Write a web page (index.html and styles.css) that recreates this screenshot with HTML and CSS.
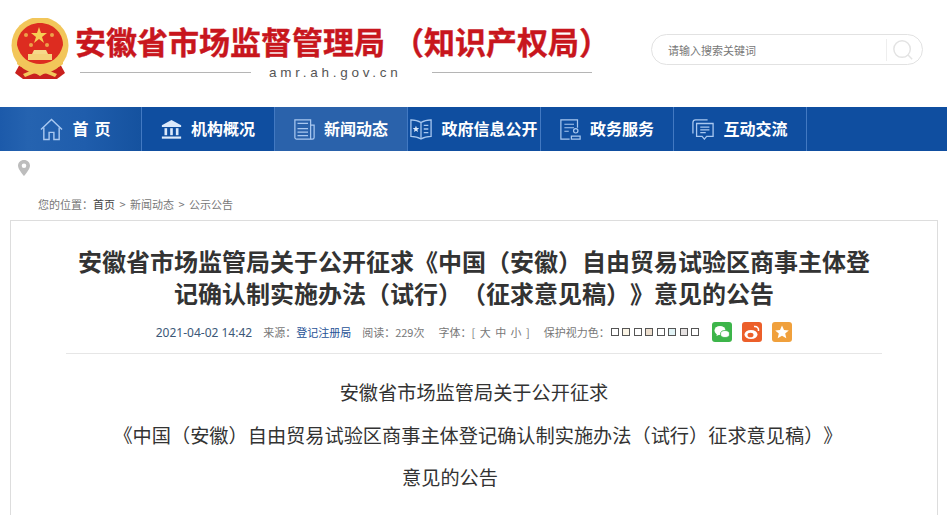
FILE: index.html
```html
<!DOCTYPE html>
<html lang="zh-CN">
<head>
    <meta charset="UTF-8">
    <meta name="viewport" content="width=device-width, initial-scale=1.0">
    <title>安徽省市场监督管理局（知识产权局）</title>
    <link rel="stylesheet" href="styles.css">
</head>
<body>
    <header class="header">
        <svg class="emblem" viewBox="0 0 58 62" width="58" height="62">
            <path d="M10 44 L4 55 L12 61 L46 61 L54 55 L48 44 Z" fill="#c9201e"/>
            <path d="M12 56 L24 51 L29 54 L34 51 L46 56 L44 59 L34 55 L29 58 L24 55 L14 59 Z" fill="#f2c75c"/>
            <circle cx="29" cy="27.500" r="28.500" fill="#f2c65a"/>
            <path d="M29 46 C19 46 9 40 6 27 C6 14 17 5 29 5 C41 5 52 14 52 27 C49 40 39 46 29 46 Z" fill="#dd2c20"/>
            <polygon points="28,9 30,15 36,15 31,19 33,25 28,21 23,25 25,19 20,15 26,15" fill="#f6cf55"/>
            <circle cx="15" cy="17" r="2" fill="#eda24a"/>
            <circle cx="41" cy="17" r="2" fill="#eda24a"/>
            <circle cx="20" cy="27" r="2" fill="#eda24a"/>
            <circle cx="36" cy="27" r="2" fill="#eda24a"/>
            <path d="M23 32 H35 L37 36 H21 Z" fill="#f6d98a"/>
            <rect x="17" y="36" width="24" height="6" fill="#f4d27a"/>
            <path d="M6 38 C12 50 22 50 29 50 C36 50 46 50 52 38 L52 46 C44 54 14 54 6 46 Z" fill="#f2c65a"/>
        </svg>
        <div class="site">
            <div class="site-name">安徽省市场监督管理局<span class="site-sub">（知识产权局）</span></div>
            <div class="site-domain">
                <span class="rule"></span>
                <span>amr.ah.gov.cn</span>
                <span class="rule rule-right"></span>
            </div>
        </div>
        <div class="search">
            <span class="search-text">请输入搜索关键词</span>
            <span class="search-btn">
                <svg viewBox="0 0 24 24" width="22" height="22" fill="none" stroke="#e3e3e3" stroke-width="1.6">
                    <circle cx="11" cy="11" r="9"/>
                    <path d="M17.5 17.5 L22 22"/>
                </svg>
            </span>
        </div>
    </header>

    <nav class="nav">
        <a class="nav-item nav-home">
            <svg viewBox="0 0 24 24" width="23" height="23" fill="none" stroke="#a9c8f0" stroke-width="1.5">
                <path d="M1 12 L12 1.5 L23 12"/>
                <path d="M4 10 V22.5 H9.5 V15 H14.5 V22.5 H20 V10"/>
            </svg>
            <span class="nav-spaced">首页</span>
        </a>
        <a class="nav-item">
            <svg viewBox="0 0 24 24" width="21" height="21" fill="#dce9fa">
                <path d="M12 1 L23 7 V9 H1 V7 Z"/>
                <rect x="4" y="10.5" width="3" height="8"/>
                <rect x="10.5" y="10.5" width="3" height="8"/>
                <rect x="17" y="10.5" width="3" height="8"/>
                <rect x="1" y="20" width="22" height="2.5"/>
            </svg>
            <span>机构概况</span>
        </a>
        <a class="nav-item nav-active">
            <svg viewBox="0 0 24 24" width="21" height="23" fill="none" stroke="#a9c8f0" stroke-width="1.4">
                <path d="M1 1 H19 V23 H3 C2 23 1 22 1 21 Z"/>
                <path d="M19 7 H23 V21 C23 22 22 23 21 23 H19"/>
                <path d="M4 5 H16 M4 11 H16 M4 15 H16 M4 19 H16"/>
            </svg>
            <span>新闻动态</span>
        </a>
        <a class="nav-item">
            <svg viewBox="0 0 24 24" width="22" height="22" fill="none" stroke="#a9c8f0" stroke-width="1.4">
                <path d="M12 5 C9 3 5 2 1 2 V20 C5 20 9 21 12 23 C15 21 19 20 23 20 V2 C19 2 15 3 12 5 Z"/>
                <path d="M12 5 V23 M15 8 H20 M15 12 H20 M15 16 H20"/>
                <polygon points="6.5,8.5 7.5,11 10,11 8,12.8 8.8,15.2 6.5,13.8 4.2,15.2 5,12.8 3,11 5.5,11" fill="#dce9fa" stroke="none"/>
            </svg>
            <span>政府信息公开</span>
        </a>
        <a class="nav-item">
            <svg viewBox="0 0 24 24" width="21" height="23" fill="none" stroke="#a9c8f0" stroke-width="1.4">
                <path d="M20 10 V1 H1 V23 H11"/>
                <path d="M5 6 H16 M5 10 H16 M5 14 H10"/>
                <circle cx="18" cy="13.5" r="2.5"/>
                <path d="M13 23 V19.5 H23 V23 Z"/>
            </svg>
            <span>政务服务</span>
        </a>
        <a class="nav-item">
            <svg viewBox="0 0 24 24" width="22" height="22" fill="none" stroke="#a9c8f0" stroke-width="1.4">
                <path d="M1 17 V5 C1 3 2 2 4 2 H17"/>
                <path d="M5 6 H23 V20 H16 L13.5 23 L11 20 H5 Z"/>
                <path d="M9 10 H19 M9 13 H19 M9 16 H15"/>
            </svg>
            <span>互动交流</span>
        </a>
    </nav>

    <div class="pin-row">
        <svg viewBox="0 0 12 16" width="12" height="16">
            <path d="M6 0 C2.5 0 0 2.6 0 5.8 C0 9.5 6 16 6 16 C6 16 12 9.5 12 5.8 C12 2.6 9.500 0 6 0 Z M6 8 A2.300 2.300 0 1 1 6 3.400 A2.300 2.300 0 0 1 6 8 Z" fill="#bdbdbd" fill-rule="evenodd"/>
        </svg>
    </div>

    <div class="crumbs">您的位置：<span class="crumb-link">首页</span> &gt; 新闻动态 &gt; 公示公告</div>

    <main class="article">
        <h1 class="article-title">安徽省市场监管局关于公开征求《中国（安徽）自由贸易试验区商事主体登记确认制实施办法（试行）（征求意见稿）》意见的公告</h1>
        <div class="meta">
            <span class="meta-date">2021-04-02 14:42</span>
            <span>来源：<span class="meta-link">登记注册局</span></span>
            <span>阅读：229次</span>
            <span class="meta-wide meta-font">字体：[ 大 中 小 ]</span>
            <span class="meta-wide">保护视力色：</span>
            <span class="swatches">
                <i class="swatch"></i>
                <i class="swatch s-cream"></i>
                <i class="swatch"></i>
                <i class="swatch s-tan"></i>
                <i class="swatch"></i>
                <i class="swatch s-blue"></i>
                <i class="swatch s-grey"></i>
                <i class="swatch"></i>
            </span>
            <span class="shares">
                <span class="share share-wechat">
                    <svg viewBox="0 0 20 20" width="20" height="20" fill="#fff">
                        <ellipse cx="8" cy="8.500" rx="5.500" ry="4.500"/>
                        <path d="M5 11 L4.500 14 L7.500 12.500 Z"/>
                        <ellipse cx="13" cy="12" rx="4.500" ry="3.500" stroke="#3db54a" stroke-width="0.8"/>
                    </svg>
                </span>
                <span class="share share-weibo">
                    <svg viewBox="0 0 20 20" width="20" height="20">
                        <ellipse cx="9" cy="12.500" rx="6.500" ry="4.500" fill="#fff"/>
                        <ellipse cx="8.500" cy="13" rx="3" ry="2.300" fill="#ec5f2a"/>
                        <path d="M12 4.500 C15 4 17 6 16.500 9" fill="none" stroke="#fff" stroke-width="1.500"/>
                    </svg>
                </span>
                <span class="share share-star">
                    <svg viewBox="0 0 20 20" width="20" height="20">
                        <polygon points="10,3.500 12,8 16.800,8.400 13.200,11.500 14.300,16.200 10,13.700 5.700,16.200 6.800,11.500 3.200,8.400 8,8" fill="#fff"/>
                    </svg>
                </span>
            </span>
        </div>
        <div class="article-body">
            <p>安徽省市场监管局关于公开征求</p>
            <p class="line-long">《中国（安徽）自由贸易试验区商事主体登记确认制实施办法（试行）征求意见稿）》</p>
            <p class="line-last">意见的公告</p>
        </div>
    </main>
</body>
</html>
```

FILE: styles.css
```css
* {
    box-sizing: border-box;
}
html, body {
    height: 515px;
    overflow: hidden;
}
body {
    margin: 0;
    display: flex;
    flex-direction: column;
    background-color: #fff;
    color: #333;
    font-family: "Noto Sans CJK SC", "Noto Sans", sans-serif;
    text-spacing-trim: space-all;
}
.header {
    display: flex;
    align-items: flex-start;
    height: 107px;
    padding: 18px 0 0 11px;
}
.emblem {
    flex: none;
}
.site {
    width: 530px;
    margin-left: 6px;
}
.site-name {
    height: 46px;
    font-size: 31px;
    line-height: 46px;
    font-weight: bold;
    color: #c8161d;
    white-space: nowrap;
    -webkit-text-stroke: 0.4px #c8161d;
}
.site-sub {
    margin-left: 8px;
}
.site-domain {
    display: flex;
    align-items: center;
    height: 16px;
    margin-left: 5px;
    font-family: "Liberation Sans", sans-serif;
    font-size: 13.5px;
    letter-spacing: 3.75px;
    color: #555;
    white-space: nowrap;
}
.rule {
    width: 171px;
    margin-right: 18px;
    border-top: 1px solid #b5b5b5;
}
.rule-right {
    width: 160px;
    margin-left: 30px;
    margin-right: 0;
}
.search {
    display: flex;
    align-items: center;
    justify-content: space-between;
    width: 272px;
    height: 31px;
    margin: 16px 0 0 46px;
    padding: 0 6px 0 16px;
    border: 1px solid #e2e2e2;
    border-radius: 16px;
    font-size: 11px;
    color: #777;
}
.search-btn {
    display: flex;
    justify-content: center;
    width: 30px;
    padding-left: 2px;
    border-left: 1px solid #eee;
}
.nav {
    display: flex;
    height: 44px;
    background-color: #0f4ea0;
}
.nav-item {
    display: flex;
    align-items: center;
    justify-content: center;
    gap: 9px;
    width: 133px;
    border-right: 1px solid #4279c2;
    font-size: 16px;
    font-weight: bold;
    color: #fff;
    white-space: nowrap;
}
.nav-item span {
    margin-bottom: 2px;
}
.nav-home {
    width: 142px;
    padding-left: 10px;
    background-image: linear-gradient(to right, #1c5aaa, #2563b0 20%, #1f5dac 60%, #15529f);
}
.nav-active {
    background-color: #2a62ab;
}
.nav-spaced {
    letter-spacing: 6px;
    margin-right: -6px;
}
.pin-row {
    display: flex;
    height: 38px;
    padding: 9px 0 0 18px;
}
.crumbs {
    height: 31px;
    padding: 7px 0 0 38px;
    font-size: 11px;
    line-height: 16px;
    word-spacing: 2px;
    color: #777;
}
.crumb-link {
    color: #444;
}
.article {
    flex: 1;
    margin: 0 9px 0 10px;
    padding: 24px 55px 0;
    border: 1px solid #ddd;
    border-bottom: none;
}
.article-title {
    width: 800px;
    margin: 0 auto;
    font-size: 24px;
    line-height: 32px;
    font-weight: bold;
    text-align: center;
    color: #333;
}
.meta {
    display: flex;
    align-items: center;
    justify-content: center;
    gap: 11px;
    height: 41px;
    margin-top: 4px;
    padding-bottom: 2px;
    border-bottom: 1px solid #e6e6e6;
    font-size: 11px;
    color: #777;
    white-space: nowrap;
}
.meta-date {
    font-family: "Noto Sans", sans-serif;
    font-size: 12px;
    color: #3c5878;
}
.meta-link {
    color: #1e5296;
}
.meta-wide {
    margin-left: 3px;
}
.meta-font {
    word-spacing: 2px;
}
.swatches {
    display: flex;
    gap: 3.500px;
    margin-left: -10px;
}
.swatch {
    display: block;
    width: 8px;
    height: 8px;
    border: 1px solid #555;
}
.s-cream {
    background-color: #fbf5e6;
}
.s-tan {
    background-color: #eee0d0;
}
.s-blue {
    background-color: #e2f3f6;
}
.s-grey {
    background-color: #e6e2e2;
}
.shares {
    display: flex;
    gap: 10px;
    margin-left: 2px;
}
.share {
    display: block;
    width: 20px;
    height: 20px;
    border-radius: 3px;
}
.share-wechat {
    background-color: #3db54a;
}
.share-weibo {
    background-color: #ec5f2a;
}
.share-star {
    background-color: #f0a03c;
}
.article-body {
    padding-top: 17px;
    font-size: 19.200px;
    line-height: 42.500px;
    text-align: center;
    color: #333;
}
.article-body p {
    margin: 0;
    white-space: nowrap;
}
.article-body .line-long {
    padding-left: 8px;
}
.article-body .line-last {
    padding-right: 48px;
}
```
